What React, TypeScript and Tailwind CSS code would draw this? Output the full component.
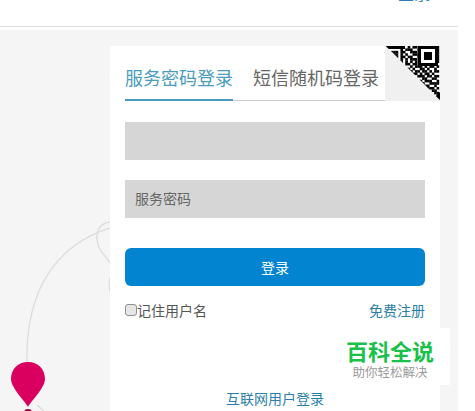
const font = { fontFamily: '"Noto Sans CJK SC", "Noto Sans", sans-serif' };

const qrCells = [
  "1111111001011001111111","1000001011100101000001","1011101100111001011101","1011101010011101011101",
  "1011101101100101011101","1000001010111001000001","1111111010101011111111","0000000011011000000000",
  "1101011100101110101101","0010100111010011010010","1011011001101101101011","0100110110011010110100",
  "1110101011100111011011","0011010100111001100110","1100111011001110111001","0111001101110011001111",
  "1010110010101101110010","0101101101011010011101","1110010110110111010110","0011101011001100111011",
  "1101010101110011101101","0110111010011101110111",
];

function QrCorner() {
  const s = 53 / 22;
  return (
    <svg className="absolute right-0 top-0" width="55" height="55" viewBox="0 0 55 55">
      <rect width="55" height="55" fill="#f0f0f0" />
      <defs>
        <clipPath id="tri"><polygon points="1,0 55,0 55,54" /></clipPath>
      </defs>
      <g clipPath="url(#tri)">
        <rect width="55" height="55" fill="#fff" />
        {qrCells.map((row, y) =>
          row.split("").map((c, x) =>
            c === "1" ? <rect key={`${x}-${y}`} x={x * s + 1} y={y * s} width={s + 0.2} height={s + 0.2} fill="#000" /> : null,
          ),
        )}
        <rect x="0" y="0" width="20" height="3" fill="#000" />
        <rect x="33" y="0" width="20" height="20" fill="#000" />
        <rect x="36" y="3" width="14" height="14" fill="#fff" />
        <rect x="39" y="6" width="8" height="8" fill="#000" />
        <polygon points="47,54 55,46 55,54" fill="#000" />
      </g>
    </svg>
  );
}

function Backdrop() {
  return (
    <svg className="absolute left-0 top-0" width="110" height="381" viewBox="0 0 110 381">
      <path d="M27 334 C25 262 55 215 110 198" fill="none" stroke="#dcdcdc" strokeWidth="1.3" />
      <path d="M110 192 C100 193 96 201 97 210 C98 220 104 224 110 233" fill="none" stroke="#dcdcdc" strokeWidth="1.3" />
      <path d="M110 248 C109 252 109 256 110 261" fill="none" stroke="#dcdcdc" strokeWidth="1.3" />
      <path d="M37 375 L44 381" fill="none" stroke="#dcdcdc" strokeWidth="1.3" />
      <path d="M28 377 C25 371 11 358 11 349 C11 339 18 332 28 332 C38 332 45 339 45 349 C45 358 31 371 28 377 Z" fill="#d9005f" />
      <ellipse cx="28" cy="381" rx="3.5" ry="2" fill="#a8003f" />
    </svg>
  );
}

export default function App() {
  return (
    <div className="h-[411px] w-[475px] overflow-hidden bg-white" style={font}>
      <header className="flex h-[27px] w-[458px] justify-end overflow-hidden border-b border-[#dddddd] pr-[28px]">
        <span className="-mt-[19px] text-[16px] leading-[24px] text-[#2a7fb8]">登录</span>
      </header>
      <main className="relative mt-[3px] h-[381px] w-[458px] bg-[#f5f5f5] pl-[110px] pt-[16px]">
        <Backdrop />
        <section className="relative h-[400px] w-[330px] bg-white px-[15px]">
          <QrCorner />
          <div className="flex h-[55px] border-b border-[#cccccc]">
            <div className="h-[55px] border-b-2 border-[#4a9bc0] pt-[17px] text-[18px] leading-[28px] text-[#4a9bc0]">服务密码登录</div>
            <div className="ml-[20px] pt-[17px] text-[18px] leading-[28px] text-[#666666]">短信随机码登录</div>
          </div>
          <div className="mt-[21px] h-[38px] bg-[#d6d6d6]" />
          <div className="mt-[20px] flex h-[38px] items-center bg-[#d6d6d6] pb-[2px] pl-[10px] text-[14px] text-[#666666]">服务密码</div>
          <button className="mt-[30px] block h-[38px] w-full rounded-[6px] bg-[#0284d0] pt-[1px] text-[14px] text-white">登录</button>
          <div className="mt-[13px] flex h-[22px] items-center justify-between text-[14px]">
            <label className="flex items-center text-[#555555]">
              <span className="h-[12px] w-[12px] rounded-[3px] border border-[#8f8f8f] bg-[#e6e6e6]" />
              记住用户名
            </label>
            <a className="text-[#2a7fa8]">免费注册</a>
          </div>
          <div className="mt-[66px] text-center text-[14px] leading-[22px] text-[#2a7fa8]">互联网用户登录</div>
        </section>
        <div className="absolute left-[340px] top-[298px] flex h-[57px] w-[110px] flex-col items-center bg-white pr-[10px] pt-[8px]">
          <div className="text-[22px] font-bold leading-[28px] text-[#19c04a]">百科全说</div>
          <div className="text-[12.5px] leading-[16px] text-[#999999]">助你轻松解决</div>
        </div>
      </main>
    </div>
  );
}
